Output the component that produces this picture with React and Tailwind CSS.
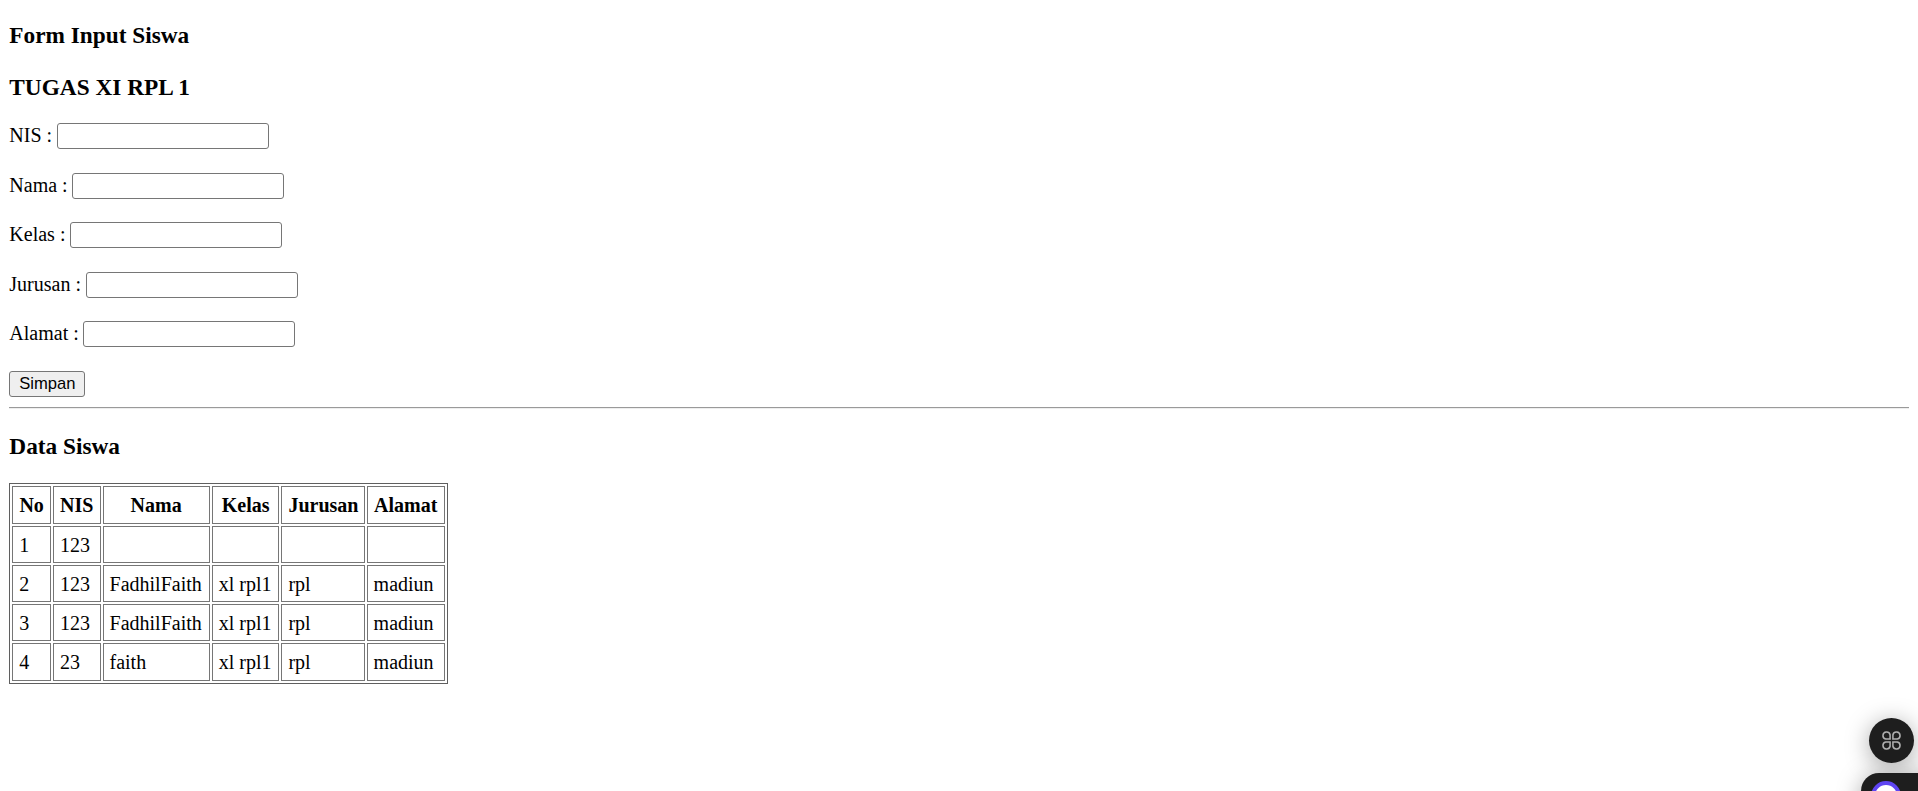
const fields = [
  { label: "NIS" },
  { label: "Nama" },
  { label: "Kelas" },
  { label: "Jurusan" },
  { label: "Alamat" },
];
const headers = ["No", "NIS", "Nama", "Kelas", "Jurusan", "Alamat"];
const colClasses = ["w-[38.5px]", "w-[47.5px]", "w-[107px]", "w-[67.5px]", "w-[83px]", "w-[78px]"];
const rows = [
  ["1", "123", "", "", "", ""],
  ["2", "123", "FadhilFaith", "xl rpl1", "rpl", "madiun"],
  ["3", "123", "FadhilFaith", "xl rpl1", "rpl", "madiun"],
  ["4", "23", "faith", "xl rpl1", "rpl", "madiun"],
];

export default function App() {
  return (
    <div className="relative h-[791px] overflow-hidden bg-white text-black font-['Liberation_Serif',serif] text-[20px] px-[9.33px] pt-[22px]">
      <h3 className="text-[23.3px] font-bold h-[26px] leading-[26px]">Form Input Siswa</h3>
      <h3 className="text-[23.3px] font-bold h-[26px] leading-[26px] mt-[25.6px]">TUGAS XI RPL 1</h3>
      <div className="mt-[23.7px] flex flex-col gap-[23.5px]">
        {fields.map((f) => (
          <p key={f.label} className="flex items-start h-[26px]">
            <span className="whitespace-pre leading-[25px]">{f.label} : </span>
            <input type="text" className="w-[212px] h-[26px] bg-white border border-[#767676] rounded-[3px] ml-[-0.5px]" />
          </p>
        ))}
      </div>
      <button className="block mt-[24px] w-[76px] h-[26px] bg-[#efefef] border border-[#767676] rounded-[3px] font-['Liberation_Sans',sans-serif] text-[16.6px] leading-none">
        Simpan
      </button>
      <hr className="mt-[9.5px] border-0 border-t border-b border-t-[#9a9a9a] border-b-[#eeeeee]" />
      <h3 className="text-[23.3px] font-bold h-[26px] leading-[26px] mt-[24px]">Data Siswa</h3>
      <table className="mt-[24.5px] table-fixed border border-[#5f5f5f] border-separate border-spacing-[2.5px] text-[20px] w-[438.5px]">
        <colgroup>
          {colClasses.map((c) => (
            <col key={c} className={c} />
          ))}
        </colgroup>
        <thead>
          <tr>
            {headers.map((h) => (
              <th key={h} className="border border-[#767676] px-[6px] pt-[7px] pb-[5.3px] font-bold leading-[23px] text-center whitespace-nowrap">{h}</th>
            ))}
          </tr>
        </thead>
        <tbody>
          {rows.map((r) => (
            <tr key={r[0]}>
              {r.map((c, i) => (
                <td key={i} className="border border-[#767676] px-[6px] pt-[7px] pb-[5.3px] leading-[23px] h-[37.3px] text-left font-normal whitespace-nowrap">{c}</td>
              ))}
            </tr>
          ))}
        </tbody>
      </table>

      <div className="absolute left-[1868.5px] top-[717.5px] w-[45px] h-[45px] rounded-full bg-[#1e1e1e] shadow-[0_4px_24px_rgba(0,0,0,0.35)] flex items-center justify-center">
        <svg width="23" height="23" viewBox="0 0 21 21" fill="none" stroke="#b0b0b0" strokeWidth="1.4">
          <path d="M9.2 9.2H5.2a3.3 3.3 0 1 1 4-4z" />
          <path d="M11.8 9.2h4a3.3 3.3 0 1 0-4-4z" />
          <path d="M9.2 11.8H5.2a3.3 3.3 0 1 0 4 4z" />
          <path d="M11.8 11.8h4a3.3 3.3 0 1 1-4 4z" />
        </svg>
      </div>
      <div className="absolute left-[1861px] top-[773px] w-[80px] h-[50px] rounded-[18px] bg-[#1e1e1e] shadow-[0_4px_24px_rgba(0,0,0,0.35)]">
        <div className="absolute left-[10px] top-[8px] w-[30px] h-[30px] rounded-full bg-white border-[4px] border-[#5f45f2]" />
      </div>
    </div>
  );
}
